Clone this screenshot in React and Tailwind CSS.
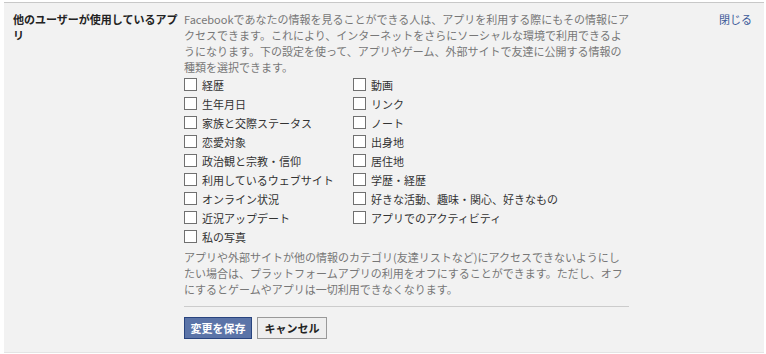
import React from "react";

const col1 = ["経歴", "生年月日", "家族と交際ステータス", "恋愛対象", "政治観と宗教・信仰", "利用しているウェブサイト", "オンライン状況", "近況アップデート", "私の写真"];
const col2 = ["動画", "リンク", "ノート", "出身地", "居住地", "学歴・経歴", "好きな活動、趣味・関心、好きなもの", "アプリでのアクティビティ"];

function Item({ label }) {
  return (
    <div className="flex items-center h-[19px]">
      <span className="w-[13px] h-[13px] border border-[#707070] bg-white shrink-0" />
      <span className="ml-[5px] text-[11px] leading-[16px] text-[#333333] whitespace-nowrap">{label}</span>
    </div>
  );
}

export default function App() {
  const font = { fontFamily: '"Noto Sans CJK JP", "Noto Sans", sans-serif' };
  return (
    <div className="w-[766px] h-[354px] bg-white pt-[2px] pl-[4px] pr-[2px]" style={font}>
      <div className="h-[351px] bg-[#f2f2f2] border-t border-[#c8c8c8] border-b border-b-[#e4e4e4] flex">
        <div className="w-[180px] shrink-0 pl-[9px] pt-[8px] text-[11px] leading-[16px] font-bold text-[#222222]">
          他のユーザーが使用しているアプ<br />リ
        </div>
        <div className="w-[446px] shrink-0 pt-[8px]">
          <p className="text-[11px] leading-[16px] text-[#777777] whitespace-nowrap">
            Facebookであなたの情報を見ることができる人は、アプリを利用する際にもその情報にア<br />
            クセスできます。これにより、インターネットをさらにソーシャルな環境で利用できるよ<br />
            うになります。下の設定を使って、アプリやゲーム、外部サイトで友達に公開する情報の<br />
            種類を選択できます。
          </p>
          <div className="flex">
            <div className="w-[169px] flex flex-col">
              {col1.map((l) => <Item key={l} label={l} />)}
            </div>
            <div className="flex flex-col">
              {col2.map((l) => <Item key={l} label={l} />)}
            </div>
          </div>
          <p className="mt-[3px] text-[11px] leading-[16px] text-[#777777] whitespace-nowrap">
            アプリや外部サイトが他の情報のカテゴリ(友達リストなど)にアクセスできないようにし<br />
            たい場合は、プラットフォームアプリの利用をオフにすることができます。ただし、オフ<br />
            にするとゲームやアプリは一切利用できなくなります。
          </p>
          <div className="mt-[9px] border-t border-[#cccccc] w-[445px]" />
          <div className="mt-[10px] flex gap-[5px]">
            <button className="h-[22px] w-[68px] bg-[#5b74a8] border border-[#29447e] text-white text-[11px] font-bold leading-none flex items-center justify-center">
              変更を保存
            </button>
            <button className="h-[22px] w-[70px] bg-[#eeeeee] border border-[#999999] text-[#222222] text-[11px] font-bold leading-none flex items-center justify-center">
              キャンセル
            </button>
          </div>
        </div>
        <div className="flex-1 flex justify-end pr-[12px] pt-[8px]">
          <span className="text-[11px] leading-[16px] text-[#3b5998]">閉じる</span>
        </div>
      </div>
    </div>
  );
}
